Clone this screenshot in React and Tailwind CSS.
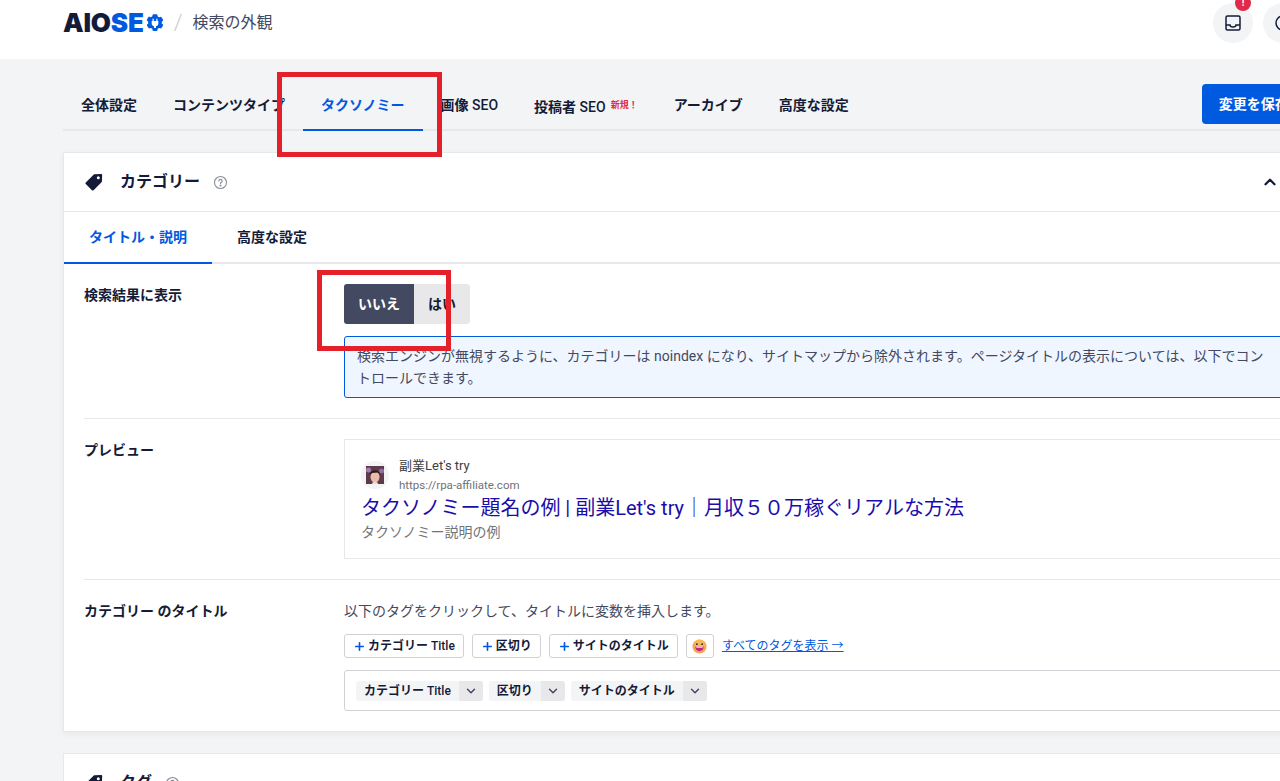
import React from "react";
import { ChevronUp, ChevronDown, Plus } from "lucide-react";

const F = { fontFamily: 'Roboto, "Noto Sans CJK JP", sans-serif' };

function TagIcon({ className }) {
  return (
    <svg viewBox="0 0 20 20" className={className} fill="#141b38">
      <path d="M10.6 2.2 17 1.9c.7 0 1.2.5 1.2 1.2l-.3 6.4c0 .3-.1.6-.4.8L9.6 18.2c-.5.5-1.2.5-1.7 0L1.8 12.1c-.5-.5-.5-1.2 0-1.7L9.8 2.6c.2-.2.5-.4.8-.4Zm3.7 2.1a1.5 1.5 0 1 0 0 3 1.5 1.5 0 0 0 0-3Z" fillRule="evenodd" />
    </svg>
  );
}

function Help({ className }) {
  return (
    <svg viewBox="0 0 16 16" className={className} fill="none" stroke="#8c8f9a" strokeWidth="1.2">
      <circle cx="8" cy="8" r="6.4" />
      <path d="M6.2 6.4c0-1 .8-1.7 1.8-1.7s1.8.7 1.8 1.6c0 1.4-1.8 1.4-1.8 2.8" strokeLinecap="round" />
      <circle cx="8" cy="11.2" r=".5" fill="#8c8f9a" />
    </svg>
  );
}

function Gear() {
  return (
    <svg viewBox="0 0 24 24" className="w-[20px] h-[20px] ml-[1px]">
      <path fill="#005ae0" d="M12 1.500c1 0 1.900.1 2.800.4l.4 2.300 1.800 1 2.200-.8c1.300 1.300 2.200 2.800 2.700 4.600l-1.800 1.500v2.100l1.800 1.500c-.5 1.800-1.400 3.300-2.700 4.600l-2.200-.8-1.800 1-.4 2.300c-1.800.5-3.800.5-5.600 0l-.4-2.300-1.800-1-2.200.8c-1.300-1.300-2.200-2.800-2.700-4.600l1.800-1.500v-2.100L2.100 8.800c.5-1.800 1.400-3.300 2.700-4.600l2.200.8 1.800-1 .4-2.300c.9-.2 1.800-.3 2.800-.3Z" />
      <path fill="#fff" d="M9 7h1.500v2.500h3V7H15v2.500h1v3c0 1.700-1.100 3-2.800 3.400V18h-2.400v-2.100C9.100 15.500 8 14.200 8 12.500v-3h1V7Z" />
    </svg>
  );
}

function Avatar() {
  return (
    <span className="w-[28px] h-[28px] rounded-full bg-[#f1f3f4] flex items-center justify-center shrink-0">
      <svg viewBox="0 0 18 18" className="w-[18px] h-[18px]">
        <rect width="18" height="18" fill="#5b3a4a" />
        <circle cx="2.500" cy="4" r="2.500" fill="#a77bb0" />
        <circle cx="15.500" cy="5" r="2.500" fill="#9a6aa5" />
        <ellipse cx="9" cy="11" rx="4.500" ry="5.500" fill="#e9bdaa" />
        <path d="M3.500 9C4 3 14 3 14.500 9L12 6.500 6 7Z" fill="#2d1a20" />
        <path d="M6 18c0-3 6-3 6 0Z" fill="#f3d6c9" />
      </svg>
    </span>
  );
}

function Emoji() {
  return (
    <svg viewBox="0 0 16 16" className="w-[15px] h-[15px]">
      <circle cx="8" cy="8" r="7.500" fill="#f3a65a" />
      <circle cx="8" cy="6" r="5.500" fill="#f6c04e" opacity=".8" />
      <circle cx="5.200" cy="5.500" r="1" fill="#3b2a2a" />
      <circle cx="10.800" cy="5.500" r="1" fill="#3b2a2a" />
      <path d="M3.500 8h9c0 3-2 5-4.500 5S3.500 11 3.500 8Z" fill="#c0267a" />
      <path d="M4.500 8h7v1.200h-7Z" fill="#fff" />
    </svg>
  );
}

function AddTag({ children }) {
  return (
    <span className="h-[24px] px-[8px] bg-white border border-[#d0d1d7] rounded-[3px] flex items-center gap-[2px] text-[12px] font-bold text-[#141b38]">
      <Plus className="w-[13px] h-[13px] text-[#005ae0]" strokeWidth={3} />
      <span>{children}</span>
    </span>
  );
}

function Token({ children }) {
  return (
    <span className="h-[20px] rounded-[3px] bg-[#f3f4f5] flex items-center text-[12px] font-bold text-[#141b38] overflow-hidden">
      <span className="px-[8px]">{children}</span>
      <span className="w-[24px] h-full bg-[#e8e8eb] flex items-center justify-center">
        <ChevronDown className="w-[14px] h-[14px] text-[#434960]" strokeWidth={2.500} />
      </span>
    </span>
  );
}

function Row({ label, children, border = true }) {
  return (
    <div className={`mx-[20px] flex py-[20px] ${border ? "border-b border-[#e8e8eb]" : ""}`}>
      <div className="w-[260px] shrink-0 text-[14px] leading-[22px] font-bold text-[#141b38]">{label}</div>
      <div className="flex-1 min-w-0">{children}</div>
    </div>
  );
}

function Tab({ children, active }) {
  return (
    <span className={`h-[72px] px-[18px] pt-[35px] leading-[22px] whitespace-nowrap border-b-2 ${active ? "border-[#005ae0] text-[#005ae0]" : "border-transparent"}`}>
      {children}
    </span>
  );
}

const L = "font-medium";

export default function App() {
  return (
    <div style={F} className="relative w-[1280px] h-[781px] overflow-hidden bg-[#f3f4f5]">
      <header className="h-[59px] bg-white flex items-start pl-[63px]">
        <div className="flex items-center mt-[10px] h-[25px]">
          <span className="text-[26px] leading-[25px] font-black tracking-[-0.2px] text-[#141b38]" style={{ fontFamily: 'Inter, sans-serif' }}>AIO</span>
          <span className="text-[26px] leading-[25px] font-black tracking-[-0.2px] text-[#005ae0]" style={{ fontFamily: 'Inter, sans-serif' }}>SE</span>
          <Gear />
        </div>
        <span className="ml-[9px] mt-[11px] text-[22px] leading-[24px] font-light text-[#c9cad0]">/</span>
        <span className="ml-[10px] mt-[11px] text-[16px] leading-[24px] text-[#434960]">検索の外観</span>
        <div className="ml-auto flex gap-[10px] -mr-[23px] mt-[3px]">
          <span className="relative w-[40px] h-[40px] rounded-full bg-[#f3f4f5] flex items-center justify-center">
            <svg viewBox="0 0 16 16" className="w-[16px] h-[16px]" fill="none" stroke="#141b38" strokeWidth="1.500">
              <rect x="1" y="1" width="14" height="14" rx="1.500" />
              <path d="M1 10h4c0 1.500 1.200 2 3 2s3-.5 3-2h4" />
            </svg>
            <span className="absolute -top-[8px] left-[22px] w-[16px] h-[16px] rounded-full bg-[#df2a4a] text-white text-[10px] leading-[16px] font-bold text-center">!</span>
          </span>
          <span className="w-[40px] h-[40px] rounded-full bg-[#f3f4f5] flex items-center justify-center">
            <svg viewBox="0 0 16 16" className="w-[16px] h-[16px]" fill="none" stroke="#141b38" strokeWidth="1.500">
              <circle cx="8" cy="8" r="7" />
            </svg>
          </span>
        </div>
      </header>

      <main className="pl-[63px] w-[1320px]">
        <nav className="h-[72px] border-b-2 border-[#e8e8eb] flex items-start text-[14px] font-bold text-[#141b38]">
          <Tab>全体設定</Tab>
          <Tab>コンテンツタイプ</Tab>
          <Tab active>タクソノミー</Tab>
          <Tab>画像 <span className={L}>SEO</span></Tab>
          <Tab>
            投稿者 <span className={L}>SEO</span>
            <span className="ml-[5px] align-[4px] text-[9px] text-[#df2a4a]">新規！</span>
          </Tab>
          <Tab>アーカイブ</Tab>
          <Tab>高度な設定</Tab>
          <span className="mt-[25px] h-[40px] w-[120px] pl-[17px] shrink-0 rounded-[4px] bg-[#005ae0] text-white flex items-center whitespace-nowrap ml-[335px]">変更を保存</span>
        </nav>

        <section className="mt-[21px] bg-white border border-[#e8e8eb] shadow-[0_2px_6px_rgba(0,0,0,0.05)]">
          <div className="h-[59px] flex items-center border-b border-[#e8e8eb] pl-[20px] pr-[40px]">
            <TagIcon className="w-[20px] h-[20px]" />
            <span className="ml-[16px] text-[16px] font-bold text-[#141b38]">カテゴリー</span>
            <Help className="ml-[13px] w-[15px] h-[15px]" />
            <ChevronUp className="ml-auto w-[18px] h-[18px] text-[#141b38]" strokeWidth={3} />
          </div>
          <div className="h-[52px] flex border-b-2 border-[#e8e8eb] text-[14px] font-bold text-[#141b38]">
            <span className="w-[148px] h-[52px] border-b-2 border-[#005ae0] text-[#005ae0] text-center leading-[50px]">タイトル・説明</span>
            <span className="ml-[25px] leading-[50px]">高度な設定</span>
          </div>

          <Row label="検索結果に表示">
            <div className="flex h-[40px] text-[14px] font-bold">
              <span className="w-[70px] rounded-l-[3px] bg-[#434960] text-white flex items-center justify-center">いいえ</span>
              <span className="w-[56px] rounded-r-[3px] bg-[#e8e8eb] text-[#141b38] flex items-center justify-center">はい</span>
            </div>
            <div className="mt-[12px] h-[62px] px-[12px] py-[8px] rounded-[3px] border border-[#005ae0] bg-[#f0f6ff] text-[14px] leading-[22px] text-[#434960]">
              <p className="w-[912px]">検索エンジンが無視するように、カテゴリーは noindex になり、サイトマップから除外されます。ページタイトルの表示については、以下でコントロールできます。</p>
            </div>
          </Row>

          <Row label="プレビュー">
            <div className="h-[120px] border border-[#e8e8eb] pl-[16px] pt-[17px]">
              <div className="flex items-center gap-[10px]">
                <Avatar />
                <div>
                  <div className="text-[13px] leading-[18px] text-[#3c4043]">副業Let's try</div>
                  <div className="mt-[2px] text-[11.5px] leading-[16px] text-[#6f7275]">https://rpa-affiliate.com</div>
                </div>
              </div>
              <div className="mt-[1px] text-[20px] leading-[28px] text-[#1a0dab] whitespace-nowrap">タクソノミー題名の例 | 副業Let's try｜月収５０万稼ぐリアルな方法</div>
              <div className="text-[14px] leading-[20px] text-[#70757a]">タクソノミー説明の例</div>
            </div>
          </Row>

          <Row label="カテゴリー のタイトル" border={false}>
            <div className="text-[14px] leading-[22px] text-[#434960]">以下のタグをクリックして、タイトルに変数を挿入します。</div>
            <div className="mt-[12px] flex items-center gap-[8px]">
              <AddTag>カテゴリー <span className={L}>Title</span></AddTag>
              <AddTag>区切り</AddTag>
              <AddTag>サイトのタイトル</AddTag>
              <span className="w-[28px] h-[24px] bg-white border border-[#d0d1d7] rounded-[3px] flex items-center justify-center"><Emoji /></span>
              <span className="text-[12px] text-[#005ae0] underline">すべてのタグを表示 →</span>
            </div>
            <div className="mt-[12px] h-[41px] border border-[#d0d1d7] rounded-[3px] pl-[11px] flex items-center gap-[6px]">
              <Token>カテゴリー <span className={L}>Title</span></Token>
              <Token>区切り</Token>
              <Token>サイトのタイトル</Token>
            </div>
          </Row>
        </section>

        <section className="mt-[21px] h-[60px] bg-white border border-[#e8e8eb] flex items-center pl-[20px]">
          <TagIcon className="w-[20px] h-[20px]" />
          <span className="ml-[16px] text-[16px] font-bold text-[#141b38]">タグ</span>
          <Help className="ml-[13px] w-[15px] h-[15px]" />
        </section>
      </main>

      <div className="absolute left-[277px] top-[72px] w-[165px] h-[85px] border-[5px] border-[#e4202a]" />
      <div className="absolute left-[317px] top-[270px] w-[134px] h-[81px] border-[5px] border-[#e4202a]" />
    </div>
  );
}
